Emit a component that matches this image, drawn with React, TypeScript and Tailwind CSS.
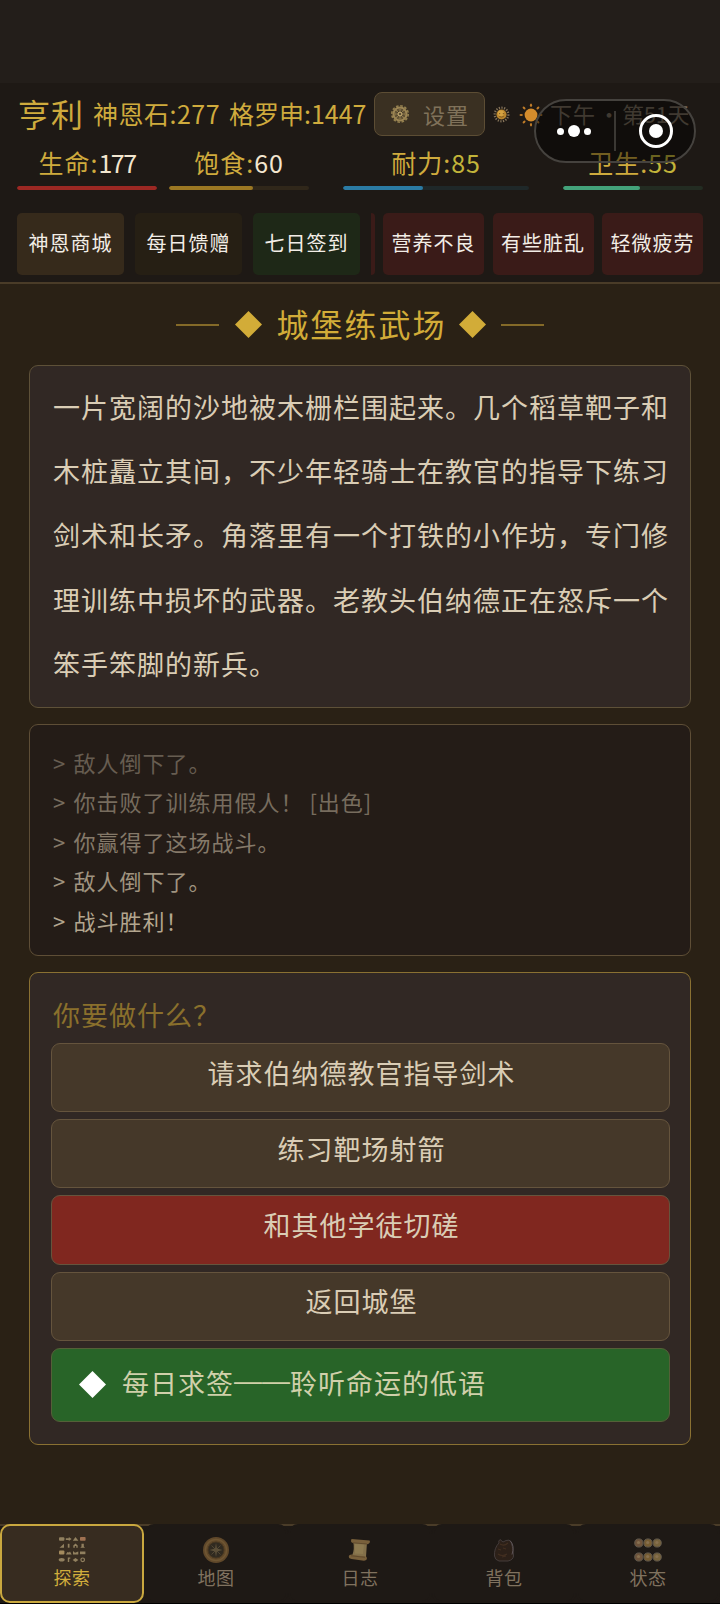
import React from 'react';
import clsx from 'clsx';

type Stat = {
  label: string;
  value: number;
  percent: number;
  width: string;
  track: string;
  fill: string;
  text: string;
};
type Action = { label: string; danger?: boolean };
type Tab = { label: string; icon: React.ReactNode };

const STATS: Stat[] = [
  { label: '生命', value: 177, percent: 100, width: 'w-[140px]', track: 'bg-[#3a1c19]', fill: 'bg-[#9c2823]', text: 'text-[#f3e6cf] tracking-[-1.5px]' },
  { label: '饱食', value: 60, percent: 60, width: 'ml-3 w-[140px]', track: 'bg-[#30271a]', fill: 'bg-[#9c7823]', text: 'text-[#f3e6cf]' },
  { label: '耐力', value: 85, percent: 43, width: 'ml-[34px] w-[186px]', track: 'bg-[#1f2829]', fill: 'bg-[#2b7ba4]', text: 'text-[#c2b43a]' },
  { label: '卫生', value: 55, percent: 55, width: 'ml-[34px] w-[140px]', track: 'bg-[#232c22]', fill: 'bg-[#43a27a]', text: 'text-[#c2b43a]' },
];

const STORY = [
  '一片宽阔的沙地被木栅栏围起来。几个稻草靶子和',
  '木桩矗立其间，不少年轻骑士在教官的指导下练习',
  '剑术和长矛。角落里有一个打铁的小作坊，专门修',
  '理训练中损坏的武器。老教头伯纳德正在怒斥一个',
  '笨手笨脚的新兵。',
];

const LOGS = [
  { text: '敌人倒下了。', color: 'text-[#675d51]' },
  { text: '你击败了训练用假人！ [出色]', color: 'text-[#776c5e]' },
  { text: '你赢得了这场战斗。', color: 'text-[#857969]' },
  { text: '敌人倒下了。', color: 'text-[#a09480]' },
  { text: '战斗胜利！', color: 'text-[#b3a68f]' },
];

const ACTIONS: Action[] = [
  { label: '请求伯纳德教官指导剑术' },
  { label: '练习靶场射箭' },
  { label: '和其他学徒切磋', danger: true },
  { label: '返回城堡' },
];

const Diamond: React.FC<{ className?: string }> = ({ className }) => (
  <svg viewBox="0 0 26 26" className={clsx('h-[27px] w-[27px] shrink-0', className)}>
    <path d="M13 0 26 13 13 26 0 13Z" fill="currentColor" />
  </svg>
);

const GearIcon = () => (
  <svg viewBox="0 0 20 20" className="h-5 w-5 shrink-0">
    <circle cx="10" cy="10" r="8.2" fill="none" stroke="#94804f" strokeWidth="1.6" strokeDasharray="2.6 1.69" />
    <circle cx="10" cy="10" r="6.5" fill="none" stroke="#9c8554" strokeWidth="2.2" />
    <circle cx="10" cy="10" r="4.4" fill="none" stroke="#6a5939" strokeWidth="1.6" />
    <path d="M10 4v12M4 10h12M5.8 5.8l8.4 8.4M14.2 5.8l-8.4 8.4" stroke="#94804f" strokeWidth=".9" />
    <circle cx="10" cy="10" r="2.6" fill="#b19a66" />
    <circle cx="10" cy="10" r="1.1" fill="#4a3d28" />
  </svg>
);

const SunFaceIcon = () => (
  <svg viewBox="0 0 18 18" className="h-[17px] w-[17px] shrink-0">
    <circle cx="9" cy="9" r="7.2" fill="none" stroke="#86745a" strokeWidth="2.4" strokeDasharray="1.3 1.5" />
    <circle cx="9" cy="9" r="5.4" fill="#b9852d" />
    <circle cx="8.4" cy="7.8" r="3.2" fill="#d6a341" />
    <circle cx="7" cy="8" r=".7" fill="#7a5520" />
    <circle cx="11" cy="8" r=".7" fill="#7a5520" />
    <path d="M6.6 11q2.4 1.6 4.8 0" stroke="#7a5520" strokeWidth=".9" fill="none" />
  </svg>
);

const SunIcon = () => (
  <svg viewBox="0 0 24 24" className="h-6 w-6 shrink-0">
    <circle cx="12" cy="12" r="6.4" fill="#d48c2c" />
    {[0, 45, 90, 135, 180, 225, 270, 315].map(a => (
      <ellipse key={a} cx="12" cy="2.2" rx="1.1" ry="1.7" fill="#c07c28" transform={`rotate(${a} 12 12)`} />
    ))}
  </svg>
);

const ExploreIcon = () => (
  <svg viewBox="0 0 28 28" className="h-7 w-7">
    <g fill="#91805f">
      <rect x="1" y="1.2" width="5.4" height="3.6" rx="1" />
      <path d="M7.8 2.3h3V1l2.8 2-2.8 2V3.9h-3z" />
      <path d="m14.8 4.7 2.7-3.7L20.4 4.7z" />
      <rect x="22" y="1" width="5.6" height="3.8" rx=".8" fill="#a07151" />
      <path d="M1.5 11.7 6 7.7v4z" />
      <path d="M9.8 7.8h1.7v3.9H9.8z" />
      <path d="M15.3 11.7V9.5l2.2-2 2.2 2v2.2h-1.4V10h-1.5v1.7z" />
      <path d="m22.3 11.7 1.2-1.2V7.8h2.3v2.7l1.2 1.2z" />
      <rect x="1" y="14.6" width="5.4" height="3.9" rx="1" fill="#a48b5e" />
      <path d="m7.8 18.5 1.7-2.5 1.5.6 1-1.2 1.7 3.1z" />
      <path d="M15 15 17 16.8l3.3-1.3v3.1H15z" />
      <path d="M22 15.5h5.4v2.7H22z" />
      <ellipse cx="3.7" cy="23.8" rx="3" ry="1.8" />
      <path d="M9.8 21.5h2.5v1.3h-1.1v3.2H9.8z" />
      <path d="m14.6 24 2.9-2.1 2.9 2.1-2.9 1.9z" />
      <circle cx="24.7" cy="23.8" r="1.8" fill="none" stroke="#91805f" strokeWidth="1.2" />
    </g>
  </svg>
);

const MapIcon = () => (
  <svg viewBox="0 0 28 28" className="h-7 w-7">
    <circle cx="14" cy="14" r="13" fill="#60482a" />
    <circle cx="14" cy="14" r="10.6" fill="none" stroke="#6f5633" strokeWidth="1.5" />
    <circle cx="14" cy="14" r="8" fill="#302a20" stroke="#463620" />
    <path d="m14 7 1 5.5L20.5 14 15 15.5 14 21l-1-5.5L7.5 14l5.5-1.5z" fill="#5c5039" />
    <path d="m9.5 9.5 9 9m0-9-9 9" stroke="#5a4e38" strokeWidth=".8" />
  </svg>
);

const LogIcon = () => (
  <svg viewBox="0 0 28 28" className="h-7 w-7">
    <path d="M7 5 21 6 20 21 6 20Q9 13 7 5Z" fill="#83704a" />
    <path d="M9 8 18 8.5 17 18 9 17.5z" fill="#8d7a50" />
    <path d="M5.5 3Q4 6.5 7 7L21.5 8.3Q25 6.8 23.5 4.5z" fill="#79603b" />
    <path d="M3 19.5Q2 22.5 5.5 23L18 24.7Q22 24 20.5 20.7L5 18.5z" fill="#79603b" />
    <path d="M7 6.8 21 8M5 19.800l14 1.5" stroke="#5a4529" strokeWidth=".8" />
  </svg>
);

const BagIcon = () => (
  <svg viewBox="0 0 28 28" className="h-7 w-7">
    <path
      d="M9 7Q4 12 4.500 20q.5 4 4.5 5h9q5-1 5.5-5 0-8-2.5-14-1.5-3-5-1.5L13 6 10 3.5Q8 5 9 7Z"
      fill="#2c2018"
      stroke="#443c3b"
      strokeWidth="1"
    />
    <path d="M10 8q4 2.5 8-1M8 13l3 1M13 12l3 1M8 18q4 3 9 0M12 21l4-1" stroke="#432f20" strokeWidth="1.2" fill="none" />
    <path d="M20 4.5q5 5 2 14" stroke="#5e5557" fill="none" />
  </svg>
);

const StatusIcon = () => (
  <svg viewBox="0 0 28 28" className="h-7 w-7">
    {[7, 21].map(cy =>
      [4.8, 14, 23.2].map((cx, i) => (
        <g key={`${cx}-${cy}`}>
          <circle cx={cx} cy={cy} r="4.1" fill={['#6e533b', '#765c32', '#77633c'][i]} stroke="#5f574b" strokeWidth="1" />
          <circle cx={cx - 0.3} cy={cy - 0.5} r="1.6" fill="#877050" />
        </g>
      )),
    )}
  </svg>
);

const TABS: Tab[] = [
  { label: '探索', icon: <ExploreIcon /> },
  { label: '地图', icon: <MapIcon /> },
  { label: '日志', icon: <LogIcon /> },
  { label: '背包', icon: <BagIcon /> },
  { label: '状态', icon: <StatusIcon /> },
];

// Mini-program capsule floating above the header
const Capsule = () => (
  <div className="absolute left-[534px] top-[99px] flex h-[64px] w-[162px] items-center rounded-full border-2 border-[#45423e] bg-black/45">
    <div className="flex w-[78px] items-center justify-center gap-[4px] pr-[2px]">
      <span className="h-[7px] w-[7px] rounded-full bg-white" />
      <span className="h-3 w-3 rounded-full bg-white" />
      <span className="h-[7px] w-[7px] rounded-full bg-white" />
    </div>
    <span className="h-10 w-[2px] bg-[#3b3834]" />
    <div className="flex flex-1 items-center justify-center pl-[2px]">
      <div className="flex h-[34px] w-[34px] items-center justify-center rounded-full border-[3px] border-white">
        <span className="h-[14px] w-[14px] rounded-full bg-white" />
      </div>
    </div>
  </div>
);

const Header = () => (
  <header className="h-[201px] shrink-0 border-b-2 border-[#4a3c28] bg-[#1e1915] px-[17px] pt-2">
    <div className="flex h-[48px] items-start whitespace-nowrap text-[#cfab3d]">
      <span className="w-[76px] shrink-0 pl-px text-[32px] leading-[45px] tracking-[1px]">亨利</span>
      <span className="w-[136px] shrink-0 text-[25px] leading-[44px] tracking-[0.5px]">神恩石:277</span>
      <span className="w-[145px] shrink-0 text-[25px] leading-[44px]">格罗申:1447</span>
      <div className="mt-px flex h-[44px] w-[111px] shrink-0 items-center gap-[13px] rounded-lg border border-[#5c4d34] bg-[#3a3022] pl-[15px] text-[#80725a]">
        <GearIcon />
        <span className="text-[22px] leading-[40px] tracking-[1px]">设置</span>
      </div>
      <div className="ml-[8px] flex h-[47px] items-center">
        <SunFaceIcon />
        <span className="ml-[9px]"><SunIcon /></span>
      </div>
      <span className="ml-[7px] text-[22px] leading-[44px] tracking-[1px] text-[#75695a]">下午</span>
      <span className="w-[26px] text-center text-[22px] leading-[44px] text-[#75695a]">·</span>
      <span className="text-[22px] leading-[44px] tracking-[-0.3px] text-[#75695a]">第51天</span>
    </div>

    <div className="flex">
      {STATS.map(s => (
        <div key={s.label} className={clsx('shrink-0', s.width)}>
          <div className="flex h-[47px] items-center justify-center pb-px text-[25px] leading-[46px] tracking-[0.8px] text-[#cfab3d]">
            <span className="tracking-[1px]">{s.label}:</span>
            <span className={s.text}>{s.value}</span>
          </div>
          <div className={clsx('h-1 overflow-hidden rounded-full', s.track)}>
            <div className={clsx('h-full rounded-full', s.fill)} style={{ width: `${s.percent}%` }} />
          </div>
        </div>
      ))}
    </div>

    <div className="mt-[23px] flex h-[62px] text-[20px] tracking-[1px] text-[#f2ede6]">
      <div className="grid w-[343px] grid-cols-3 gap-[11px]">
        <div className="flex items-center justify-center rounded-[5px] bg-[#362a1b] pb-[2px]">神恩商城</div>
        <div className="flex items-center justify-center rounded-[5px] bg-[#261f14] pb-[2px]">每日馈赠</div>
        <div className="flex items-center justify-center rounded-[5px] bg-[#1e2817] pb-[2px]">七日签到</div>
      </div>
      <div className="ml-[11px] flex w-[332px] gap-2">
        <div className="w-1 shrink-0 rounded-r-[4px] bg-[#3a1b18]" />
        <div className="grid flex-1 grid-cols-3 gap-[8.5px]">
          {['营养不良', '有些脏乱', '轻微疲劳'].map(t => (
            <div key={t} className="flex items-center justify-center whitespace-nowrap rounded-[5px] bg-[#3a1b18] pb-[2px]">{t}</div>
          ))}
        </div>
      </div>
    </div>
  </header>
);

export default function App() {
  return (
    <div className="relative flex h-[1604px] w-[720px] flex-col overflow-hidden bg-[#2a2115] font-['Noto_Sans_CJK_SC',sans-serif]">
      <div className="h-[83px] shrink-0 bg-[#231e1a]" />
      <Header />
      <Capsule />

      <main className="flex-1 px-[29px]">
        <div className="flex h-[81px] items-center justify-center gap-4 text-[#d2ac38]">
          <span className="h-[2px] w-[43px] bg-[#846a28]" />
          <Diamond />
          <h1 className="-ml-[2px] -mr-[4px] pb-[4px] text-[32px] leading-[48px] tracking-[2px]">城堡练武场</h1>
          <Diamond />
          <span className="-ml-px h-[2px] w-[43px] bg-[#846a28]" />
        </div>

        <section className="h-[343px] rounded-[9px] border border-[#5e5138] bg-[#312824] pl-[23px] pt-[9px]">
          {STORY.map(line => (
            <p key={line} className="h-[64.2px] whitespace-nowrap text-[27px] leading-[64px] tracking-[1px] text-[#dacdb5]">
              {line}
            </p>
          ))}
        </section>

        <section className="mt-4 h-[232px] rounded-[9px] border border-[#5e4e36] bg-[#241c17] pl-[23px] pt-[18px]">
          {LOGS.map((log, i) => (
            <p key={i} className={clsx('flex h-[39.4px] whitespace-pre text-[22px] leading-[39px] tracking-[1px]', log.color)}>
              <span className="w-[20.5px]">&gt;</span>
              {log.text}
            </p>
          ))}
        </section>

        <section className="mt-4 h-[473px] rounded-[9px] border border-[#8a7132] bg-[#312824] pl-[21px] pr-[20px] pt-[22px] text-[27px] tracking-[1px] text-[#dacdb5]">
          <p className="h-[48px] pl-[2px] leading-[40px] text-[#8a702c]">你要做什么？</p>
          <div className="flex flex-col gap-[7px]">
            {ACTIONS.map(a => (
              <button
                key={a.label}
                className={clsx(
                  'h-[69.2px] rounded-[9px] border border-[#65543d] pb-[10px] pl-[2px] leading-[56px] tracking-[1px]',
                  a.danger ? 'bg-[#80271f]' : 'bg-[#453829]',
                )}
              >
                {a.label}
              </button>
            ))}
            <button className="flex h-[74px] items-center gap-[16px] rounded-[9px] border border-[#546038] bg-[#286428] pl-[27px] tracking-[1px] text-[#d0d0aa]">
              <Diamond className="text-white" />
              <span className="-mt-1 flex items-center">
                每日求签
                <span className="w-[56px] pb-[3px] font-['Liberation_Sans',sans-serif] text-[28px] leading-[32px] tracking-normal">——</span>
                聆听命运的低语
              </span>
            </button>
          </div>
        </section>
      </main>

      <nav className="mb-px grid h-[79px] shrink-0 grid-cols-5 border-t-2 border-[#4a3c28] bg-[#1e1915]">
        {TABS.map((tab, i) => (
          <div
            key={tab.label}
            className={clsx(
              '-mt-[2px] flex flex-col items-center rounded-[10px] border-2 pt-[10px] text-[18px] leading-[26px] tracking-[0.5px]',
              i === 0 ? 'border-[#c9a83f] bg-[#372c20] text-[#d2ae3c]' : 'border-[#1e1915] bg-[#1e1915] text-[#80725f]',
            )}
          >
            {tab.icon}
            <span>{tab.label}</span>
          </div>
        ))}
      </nav>
      <div className="absolute bottom-0 left-0 h-px w-full bg-black" />
    </div>
  );
}
